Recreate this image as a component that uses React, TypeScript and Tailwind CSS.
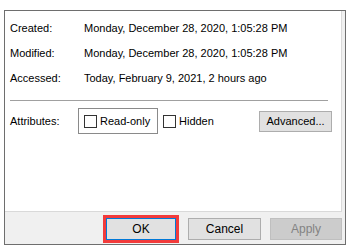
const rows = [
  { label: 'Created:', value: 'Monday, December 28, 2020, 1:05:28 PM' },
  { label: 'Modified:', value: 'Monday, December 28, 2020, 1:05:28 PM' },
  { label: 'Accessed:', value: 'Today, February 9, 2021, 2 hours ago' },
];

function Checkbox() {
  return <span className="inline-block w-[13px] h-[13px] border border-[#333333] bg-white shrink-0" />;
}

export default function App() {
  return (
    <div
      className="w-[348px] h-[246px] bg-white pl-[4px] pt-[10px] text-[11px] text-black"
      style={{ fontFamily: '"Liberation Sans", Arial, sans-serif' }}
    >
      <div className="w-[342px] h-[235px] border border-[#6e6e6e] bg-[#f0f0f0] flex flex-col">
        {/* tab page */}
        <div className="w-[337px] h-[201px] bg-white border-r border-b border-[#d9d9d9] pt-[5px] pl-[5px]">
          {rows.map((r) => (
            <div key={r.label} className="h-[25px] flex items-center">
              <div className="w-[74px]">{r.label}</div>
              <div>{r.value}</div>
            </div>
          ))}

          <div className="mt-[9px] w-[318px] h-px bg-[#a0a0a0]" />

          <div className="mt-[7px] flex items-center">
            <div className="w-[68px]">Attributes:</div>
            <div className="w-[80px] h-[26px] border border-[#8a8a8a] flex items-center pl-[5px] gap-[3px]">
              <Checkbox />
              <span>Read-only</span>
            </div>
            <div className="ml-[5px] flex items-center gap-[3px]">
              <Checkbox />
              <span>Hidden</span>
            </div>
            <button className="ml-auto mr-[9px] w-[73px] h-[21px] bg-[#e1e1e1] border border-[#adadad] flex items-center justify-center">
              Advanced...
            </button>
          </div>
        </div>

        {/* buttons */}
        <div className="flex-1 flex items-center justify-end pr-[3px] gap-[9px] pt-[1px]">
          <div className="border-[3px] border-[#f23b3b]">
            <button className="w-[70px] h-[22px] bg-[#e1e1e1] border border-[#0078d7] flex items-center justify-center text-[12px]">
              OK
            </button>
          </div>
          <button className="w-[73px] h-[22px] bg-[#e1e1e1] border border-[#adadad] flex items-center justify-center text-[12px]">
            Cancel
          </button>
          <button className="w-[72px] h-[22px] bg-[#cccccc] border border-[#bfbfbf] text-[#838383] flex items-center justify-center text-[12px]">
            Apply
          </button>
        </div>
      </div>
    </div>
  );
}
